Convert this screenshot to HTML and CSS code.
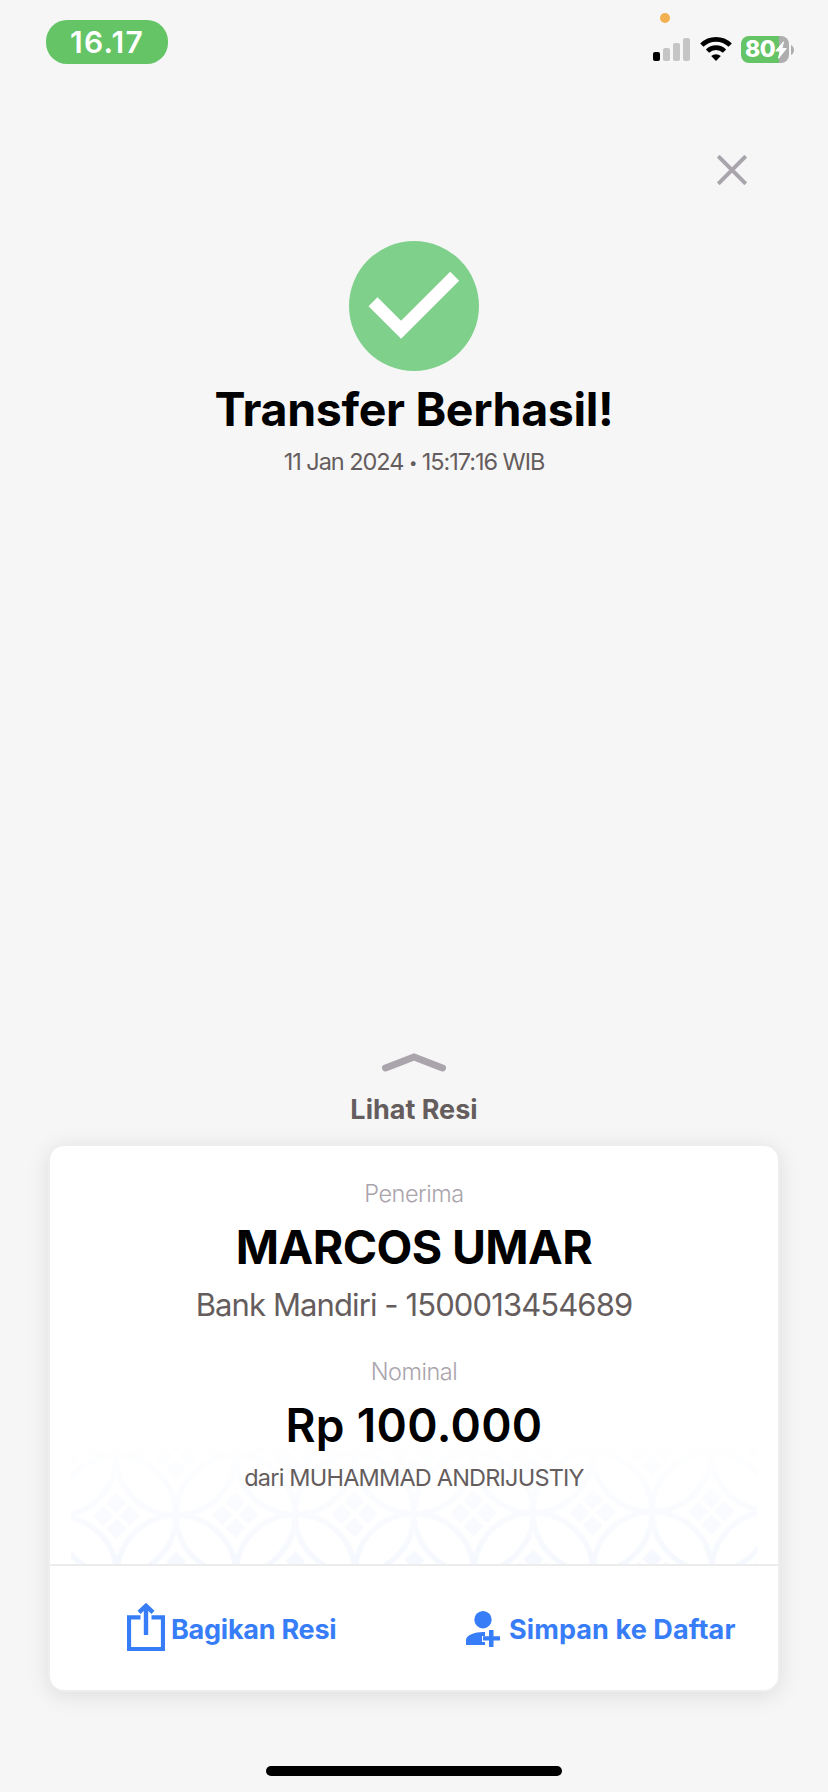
FILE: index.html
```html
<!DOCTYPE html>
<html lang="id">
<head>
<meta charset="utf-8">
<title>Transfer Berhasil</title>
<link rel="stylesheet" href="styles.css">
</head>
<body>
<div class="screen">
  <header class="status">
    <div class="time">16.17</div>
    <div class="indicators">
      <span class="mic-dot"></span>
      <svg class="signal" width="37" height="23" viewBox="0 0 37 23">
        <rect x="0" y="14" width="7" height="9" rx="2" fill="#000"/>
        <rect x="10" y="10" width="7" height="13" rx="2" fill="#c5c5c5"/>
        <rect x="20" y="5" width="7" height="18" rx="2" fill="#c5c5c5"/>
        <rect x="30" y="0" width="7" height="23" rx="2" fill="#c5c5c5"/>
      </svg>
      <svg class="wifi" width="32" height="24" viewBox="0 0 32 24">
        <path d="M1.8 8.2a20.3 20.3 0 0 1 28.4 0M7.5 14.1a12.2 12.2 0 0 1 17 0" fill="none" stroke="#000" stroke-width="4.6"/>
        <path d="M16 24l-4.8-4.9a7 7 0 0 1 9.600 0z" fill="#000"/>
      </svg>
      <div class="battery">
        <span class="battery-level">80</span>
        <svg class="bolt" width="12" height="18" viewBox="0 0 12 18"><path d="M8.500 0.800L0.700 10h4.400L3.500 17.300L11.300 7.500H6.900z" fill="#fff" stroke="#fff" stroke-width="1"/></svg>
      </div>
      <svg class="nub" width="3" height="10" viewBox="0 0 3 10"><path d="M0 0q3 1.500 3 5t-3 5z" fill="#aeaeae"/></svg>
    </div>
  </header>

  <div class="close-row">
    <svg width="30" height="30" viewBox="0 0 30 30"><path d="M1.200 1.200l27.600 27.600M28.800 1.200l-27.600 27.600" stroke="#aaa4ac" stroke-width="4"/></svg>
  </div>

  <main class="result">
    <svg width="130" height="130" viewBox="0 0 130 130">
      <circle cx="65" cy="65" r="65" fill="#7fd08b"/>
      <path d="M24 60.800L52.100 88.700L105.700 35.200" fill="none" stroke="#fff" stroke-width="12.700"/>
    </svg>
    <h1 class="title">Transfer Berhasil!</h1>
    <p class="date">11 Jan 2024 <span class="bullet">•</span> 15:17:16 WIB</p>
  </main>

  <div class="receipt-toggle">
    <svg width="64" height="20" viewBox="0 0 64 20"><path d="M3.500 15L32 4L60.500 15" fill="none" stroke="#aaa4ac" stroke-width="7" stroke-linecap="round"/></svg>
    <span class="toggle-label">Lihat Resi</span>
  </div>

  <section class="card">
    <div class="details">
      <p class="label recipient-label">Penerima</p>
      <h2 class="name">MARCOS UMAR</h2>
      <p class="bank">Bank Mandiri - 1500013454689</p>
      <p class="label amount-label">Nominal</p>
      <p class="amount">Rp 100.000</p>
      <p class="sender">dari MUHAMMAD ANDRIJUSTIY</p>
      <svg class="batik" width="686" height="126" viewBox="0 0 686 126">
        <defs>
          <pattern id="kawung" x="45" y="78" width="119" height="119" patternUnits="userSpaceOnUse" patternTransform="rotate(-0.4)">
            <g fill="none" stroke="#f5f8fe" stroke-width="5.500">
              <circle cx="0" cy="0" r="59.500"/><circle cx="119" cy="0" r="59.500"/>
              <circle cx="0" cy="119" r="59.500"/><circle cx="119" cy="119" r="59.500"/>
              <circle cx="59.500" cy="59.500" r="59.500"/>
            </g>
            <g fill="#f5f8fe">
              <path d="M0 3l10 10l-10 10l-10 -10zM3 0l10 -10l10 10l-10 10z"/>
              <path d="M119 3l10 10l-10 10l-10 -10zM116 0l-10 -10l-10 10l10 10z"/>
              <path d="M0 116l10 -10l-10 -10l-10 10zM3 119l10 -10l10 10l-10 10z"/>
              <path d="M119 116l10 -10l-10 -10l-10 10zM116 119l-10 -10l-10 10l10 10z"/>
              <path d="M59.500 62.500l10 10l-10 10l-10 -10zM59.500 56.500l10 -10l-10 -10l-10 10zM62.500 59.500l10 -10l10 10l-10 10zM56.500 59.500l-10 -10l-10 10l10 10z"/>
            </g>
          </pattern>
          <linearGradient id="fade" x1="0" y1="0" x2="0" y2="1">
            <stop offset="0" stop-color="#fff"/>
            <stop offset="1" stop-color="#fff" stop-opacity="0"/>
          </linearGradient>
        </defs>
        <rect width="686" height="126" fill="url(#kawung)"/>
        <rect width="686" height="126" fill="url(#fade)"/>
      </svg>
    </div>
    <div class="actions">
      <div class="action share">
        <svg width="38" height="48" viewBox="0 0 38 48" fill="none" stroke="#377df8">
          <path d="M13.500 14.300H2V46H36V14.300H24.500" stroke-width="4.200"/>
          <path d="M19 2.500V32" stroke-width="4.400"/>
          <path d="M12 9.300L19 2.800L26 9.300" stroke-width="4.400"/>
        </svg>
        <span class="share-text">Bagikan Resi</span>
      </div>
      <div class="action save">
        <svg class="person" width="34" height="36" viewBox="0 0 34 36" fill="#377df8">
          <circle cx="17" cy="8.700" r="8.700"/>
          <path d="M0 34V29C0 24 9 21 17 21H19V25H16V31H19V34z"/>
          <path d="M23 19h4.500v6.200H34v4.300h-6.500V36H23v-6.500h-6v-4.300h6z"/>
        </svg>
        <span class="save-text">Simpan ke Daftar</span>
      </div>
    </div>
  </section>

  <div class="home-bar"></div>
</div>
</body>
</html>
```
FILE: styles.css
```css
* { box-sizing: border-box; }
body { margin: 0; background: #f6f6f6; font-family: Inter, "Liberation Sans", sans-serif; color: #000; }
h1, h2, p { margin: 0; white-space: nowrap; }
svg { display: block; flex: none; }
.screen { width: 828px; height: 1792px; display: flex; flex-direction: column; overflow: hidden; }

.status { height: 80px; flex: none; display: flex; justify-content: space-between; padding: 20px 34px 0 46px; }
.time { width: 122px; height: 44px; line-height: 45px; border-radius: 21px; background: #65c466; color: #fff; text-align: center; font-size: 30px; font-weight: 600; letter-spacing: 1.2px; }
.indicators { position: relative; display: flex; padding-top: 16px; }
.mic-dot { position: absolute; left: 7px; top: -7px; width: 10px; height: 10px; border-radius: 50%; background: #f2b050; }
.signal { margin-top: 2px; }
.wifi { margin: 1px 0 0 9.500px; }
.battery { position: relative; width: 48px; height: 27px; margin-left: 9.500px; border-radius: 8px; background: linear-gradient(90deg, #65c466 38px, #aeaeae 38px); }
.battery-level { display: block; padding-left: 4px; line-height: 27px; color: #fff; font-size: 23px; font-weight: 800; letter-spacing: -0.5px; }
.bolt { position: absolute; left: 34px; top: 4.500px; }
.nub { margin: 9px 0 0 2px; }

.close-row { display: flex; justify-content: flex-end; padding: 75px 81px 0 0; }

.result { display: flex; flex-direction: column; align-items: center; padding-top: 56px; }
.title { margin-top: 10px; font-size: 46.500px; line-height: 56px; font-weight: 700; letter-spacing: -0.33px; }
.date { margin-top: 10px; font-size: 23.500px; line-height: 30px; color: #655d5d; letter-spacing: -1.05px; }
.bullet { font-size: 15px; vertical-align: 2px; line-height: 1; }

.receipt-toggle { margin-top: 576px; display: flex; flex-direction: column; align-items: center; }
.toggle-label { margin-top: 21px; font-size: 27px; line-height: 32px; font-weight: 700; color: #655d5d; letter-spacing: 0; }

.card { width: 732px; height: 548px; margin: 18px 0 0 48px; flex: none; border: 2px solid #eee; border-radius: 16px; background: #fff; background-clip: padding-box; box-shadow: 0 4px 22px rgba(0, 0, 0, 0.1); display: flex; flex-direction: column; }
.details { position: relative; height: 420px; flex: none; border-bottom: 2px solid #ececec; display: flex; flex-direction: column; align-items: center; padding-top: 33px; }
.details p, .details h2 { position: relative; z-index: 1; }
.label { font-size: 23.500px; line-height: 30px; font-weight: 300; color: #aaa4ac; letter-spacing: -0.5px; }
.name { margin-top: 10px; font-size: 46.500px; line-height: 56px; font-weight: 700; letter-spacing: -0.6px; }
.bank { margin-top: 10px; font-size: 31px; line-height: 40px; color: #655d5d; font-weight: 400; letter-spacing: -0.9px; }
.amount-label { margin-top: 32px; }
.amount { margin-top: 10px; font-size: 46px; line-height: 56px; font-weight: 600; letter-spacing: 0.35px; }
.sender { margin-top: 10px; font-size: 23.500px; line-height: 30px; color: #655d5d; letter-spacing: -0.8px; }
.batik { position: absolute; left: 21px; bottom: 0; }

.actions { flex: 1; display: grid; grid-template-columns: 1fr 1fr; color: #377df8; font-size: 27px; font-weight: 700; line-height: 32px; white-space: nowrap; }
.action { display: flex; align-items: center; }
.share { padding-left: 77px; gap: 6px; }
.share svg { margin-bottom: 2px; }
.share-text { padding-top: 3px; letter-spacing: -0.25px; }
.save { padding-left: 52px; gap: 9px; }
.person { margin-top: 2px; }
.save-text { padding-top: 3px; letter-spacing: 0.1px; }

.home-bar { width: 296px; height: 10px; margin: 74px 0 0 266px; flex: none; border-radius: 5px; background: #000; }
```
